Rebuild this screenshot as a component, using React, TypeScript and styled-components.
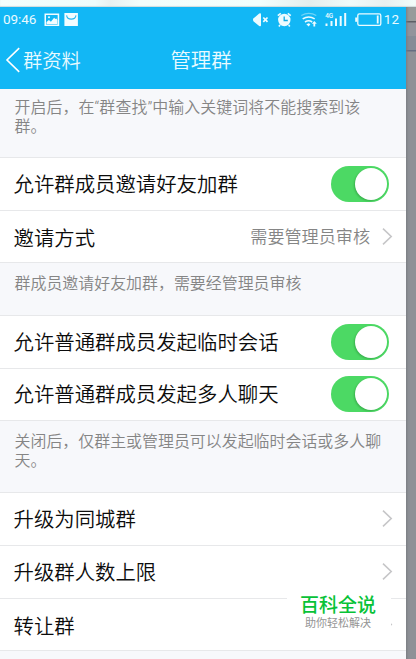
import React from "react";
import styled, { createGlobalStyle } from "styled-components";

const GlobalStyle = createGlobalStyle`
  * { box-sizing: border-box; }
  html, body { margin: 0; padding: 0; }
  body {
    width: 416px;
    height: 659px;
    overflow: hidden;
    font-family: Roboto, "Noto Sans CJK SC", sans-serif;
    font-weight: 350;
  }
`;

const Stage = styled.div`
  display: grid;
  grid-template: 7px 652px / 406px 10px;
  width: 416px;
  height: 659px;
  overflow: hidden;
`;

const TopEdge = styled.div`
  grid-column: 1 / -1;
  background: linear-gradient(90deg, #f2fffd 0, #effcfb 95px, #e8f1f1 110px, #f3fdfb 140px, #f2fffd 260px, #e4eeed 310px, #f0fbfa 350px, #e7f0f0 385px, #f2fdfb 416px);
  box-shadow: inset 0 -1px 1px #cfdcdd;
`;

const Phone = styled.main`
  display: flex;
  flex-direction: column;
  background: #fff;
`;

const Backdrop = styled.aside`
  background: linear-gradient(#969b9b 0 14px, #5c5f66 14px 15px, #92949c 16px 29px, #858c97 29px 43px, #656e82 43px 44px, #8f9197 45px);
  box-shadow: inset 3px 0 3px -2px #777b80;
`;

const Header = styled.header`
  height: 82px;
  flex: none;
  background: #12b7f5;
  color: #fff;
`;

const StatusBar = styled.div`
  display: flex;
  justify-content: space-between;
  height: 25px;
  padding: 0 7px 0 3px;
  font-size: 13.5px;
  line-height: 25px;
  font-weight: 400;
  color: #e9faff;
`;

const Clock = styled.span`
  width: 41px;
  letter-spacing: -0.1px;
`;

const StatusGroup = styled.div`
  display: flex;
`;

const NavBar = styled.div`
  display: grid;
  grid-template-columns: 1fr auto 1fr;
  height: 57px;
  padding: 0 5px;
  color: #e9faff;
`;

const Back = styled.div`
  display: flex;
  align-items: center;
  gap: 2px;
  height: 56px;
  font-size: 19.3px;
`;

const Title = styled.h1`
  margin: 0;
  padding-right: 4px;
  font-size: 20.4px;
  line-height: 58px;
  font-weight: 350;
`;

const Note = styled.p<{ $height: number; $top?: number; $tracking?: number }>`
  flex: none;
  height: ${(p) => p.$height}px;
  margin: 0;
  padding: ${(p) => p.$top ?? 11}px 20px 0 14.5px;
  border-bottom: 1px solid #e7e8ea;
  background: #f7f8fb;
  color: #858585;
  font-size: 15.95px;
  line-height: 19px;
  letter-spacing: ${(p) => p.$tracking ?? 0}px;
`;

const Row = styled.div<{ $height?: number; $lift?: number }>`
  display: flex;
  align-items: center;
  flex: none;
  height: ${(p) => p.$height ?? 53}px;
  padding: 0 13px ${(p) => p.$lift ?? 0}px 13.5px;
  border-bottom: 1px solid #e7e8ea;
  color: #0c0c0c;
  font-size: 20.4px;
  white-space: nowrap;
`;

const RowLabel = styled.span<{ $low?: boolean }>`
  flex: 1;
  padding-bottom: ${(p) => (p.$low ? 0 : 2)}px;
`;

const Value = styled.span`
  margin-right: 12px;
  padding-bottom: 3px;
  color: #858585;
  font-size: 17.1px;
`;

const Switch = styled.span`
  display: flex;
  justify-content: flex-end;
  width: 58px;
  height: 36px;
  margin-right: 4px;
  padding: 2px;
  border-radius: 18px;
  background: #4cd964;
`;

const Knob = styled.span`
  width: 32px;
  height: 32px;
  border-radius: 50%;
  background: #fff;
  box-shadow: -1px 1px 2px rgba(0, 60, 10, 0.25);
`;

const Bottom = styled.div`
  flex: 1;
  background: #f7f8fb;
`;

const Watermark = styled.div`
  position: absolute;
  left: 287px;
  top: 592px;
  width: 104px;
  height: 44px;
  padding: 1px 0 0 13px;
  background: #fff;
`;

const Brand = styled.div`
  color: #08c238;
  font-size: 19px;
  line-height: 25px;
  font-weight: 500;
`;

const Slogan = styled.div`
  padding-left: 5px;
  color: #949494;
  font-size: 11px;
  line-height: 11px;
  font-weight: 400;
`;

function Chevron() {
  return (
    <svg width="11" height="18" viewBox="0 0 11 18" fill="none" stroke="#c6c6c8" strokeWidth="1.6">
      <path d="M1 .7 9.2 8.5 1 16.3" />
    </svg>
  );
}

function NoticeIcons() {
  return (
    <svg width="40" height="25" viewBox="44 7 40 25">
      <path fill="#f3fcff" fillRule="evenodd" d="M44.5 13.5h14.7v12.6H44.5zM46 15v9.5h11.7V15z" />
      <path fill="#f3fcff" d="m46.5 24 0-2 2.4-2 2 1.8 3.2-4 1.3 1.3 1-.6 1 1.5v4z" />
      <circle cx="49" cy="17.2" r="1" fill="#f3fcff" />
      <path fill="#f3fcff" d="M64.4 13h13.5v13H64.4z" />
      <path d="M66.6 15.4c.6 5 8.7 5 9.4 0" fill="none" stroke="#25b9f2" strokeWidth="1.1" />
    </svg>
  );
}

function SystemIcons() {
  return (
    <svg width="131" height="25" viewBox="253 7 131 25" fill="none" stroke="#edfbff">
      <path fill="#edfbff" stroke="none" d="M253 19.5q0-1.6 1.6-2.1l4.6-3.8q1.8-1 1.8.8v10.8q0 1.8-1.8.8l-4.6-3.8q-1.6-.5-1.6-2.1z" />
      <path strokeWidth="1.7" d="m263.3 17.5 4.2 4.4m0-4.4-4.2 4.4" />
      <circle cx="284.3" cy="20" r="6.2" fill="#edfbff" stroke="none" />
      <path strokeWidth="1.6" d="m277.8 15.7 3-2.3m7 0 3 2.3M280 25l-1.1 1.5M288.7 25l1.1 1.5" />
      <path stroke="#12a9e3" strokeWidth="1.3" d="M284.2 16.5v4h3.6" />
      <path stroke="#70d3f7" strokeWidth="1.2" d="M301.3 15.6q7.5-4.6 15 0" />
      <path strokeWidth="1.6" d="M302.7 18.9q6-3.8 12 0M305 22q3.6-2.4 7.2 0" />
      <path fill="#edfbff" stroke="none" d="m306.3 24.2 2.5-1 1.6 1-1.7 2.2zM313.4 26.5v-2.7h-1.6l2.5-2.7 2.5 2.7h-1.6v2.7z" />
      <path strokeWidth="2" d="M326.5 23.5v2.5M331.5 21v5M336 18.5V26M340.7 16v10M345.2 13v13" />
      <text x="325.3" y="18" fill="#edfbff" stroke="none" fontSize="6.4" fontWeight="500" letterSpacing="-.3" fontFamily="Roboto, sans-serif">4G</text>
      <rect x="357.8" y="13.8" width="23" height="11.5" rx="1.6" strokeWidth="1.3" />
      <path strokeWidth="2" d="M356.2 17.5v4.3" />
      <path strokeWidth="1.8" d="M377.7 15.5v8" />
    </svg>
  );
}

function Toggle() {
  return (
    <Switch role="switch" aria-checked="true">
      <Knob />
    </Switch>
  );
}

export default function App() {
  return (
    <>
      <GlobalStyle />
      <Stage lang="zh-CN">
        <TopEdge />
        <Phone>
          <Header>
            <StatusBar>
              <StatusGroup>
                <Clock>09:46</Clock>
                <NoticeIcons />
              </StatusGroup>
              <StatusGroup>
                <SystemIcons />
                <span>12</span>
              </StatusGroup>
            </StatusBar>
            <NavBar>
              <Back>
                <svg width="16" height="26" viewBox="0 0 16 26" fill="none" stroke="#fff" strokeWidth="1.6">
                  <path d="M14.2 1.2 2 13l12.2 11.8" />
                </svg>
                群资料
              </Back>
              <Title>管理群</Title>
            </NavBar>
          </Header>
          <Note $height={69} $top={9} $tracking={0.07}>开启后，在“群查找”中输入关键词将不能搜索到该群。</Note>
          <Row>
            <RowLabel>允许群成员邀请好友加群</RowLabel>
            <Toggle />
          </Row>
          <Row $height={52}>
            <RowLabel $low>邀请方式</RowLabel>
            <Value>需要管理员审核</Value>
            <Chevron />
          </Row>
          <Note $height={53}>群成员邀请好友加群，需要经管理员审核</Note>
          <Row>
            <RowLabel>允许普通群成员发起临时会话</RowLabel>
            <Toggle />
          </Row>
          <Row $height={52} $lift={1}>
            <RowLabel>允许普通群成员发起多人聊天</RowLabel>
            <Toggle />
          </Row>
          <Note $height={72}>关闭后，仅群主或管理员可以发起临时会话或多人聊天。</Note>
          <Row>
            <RowLabel>升级为同城群</RowLabel>
            <Chevron />
          </Row>
          <Row>
            <RowLabel>升级群人数上限</RowLabel>
            <Chevron />
          </Row>
          <Row $height={52}>
            <RowLabel $low>转让群</RowLabel>
            <Chevron />
          </Row>
          <Bottom />
        </Phone>
        <Backdrop />
        <Watermark>
          <Brand>百科全说</Brand>
          <Slogan>助你轻松解决</Slogan>
        </Watermark>
      </Stage>
    </>
  );
}
